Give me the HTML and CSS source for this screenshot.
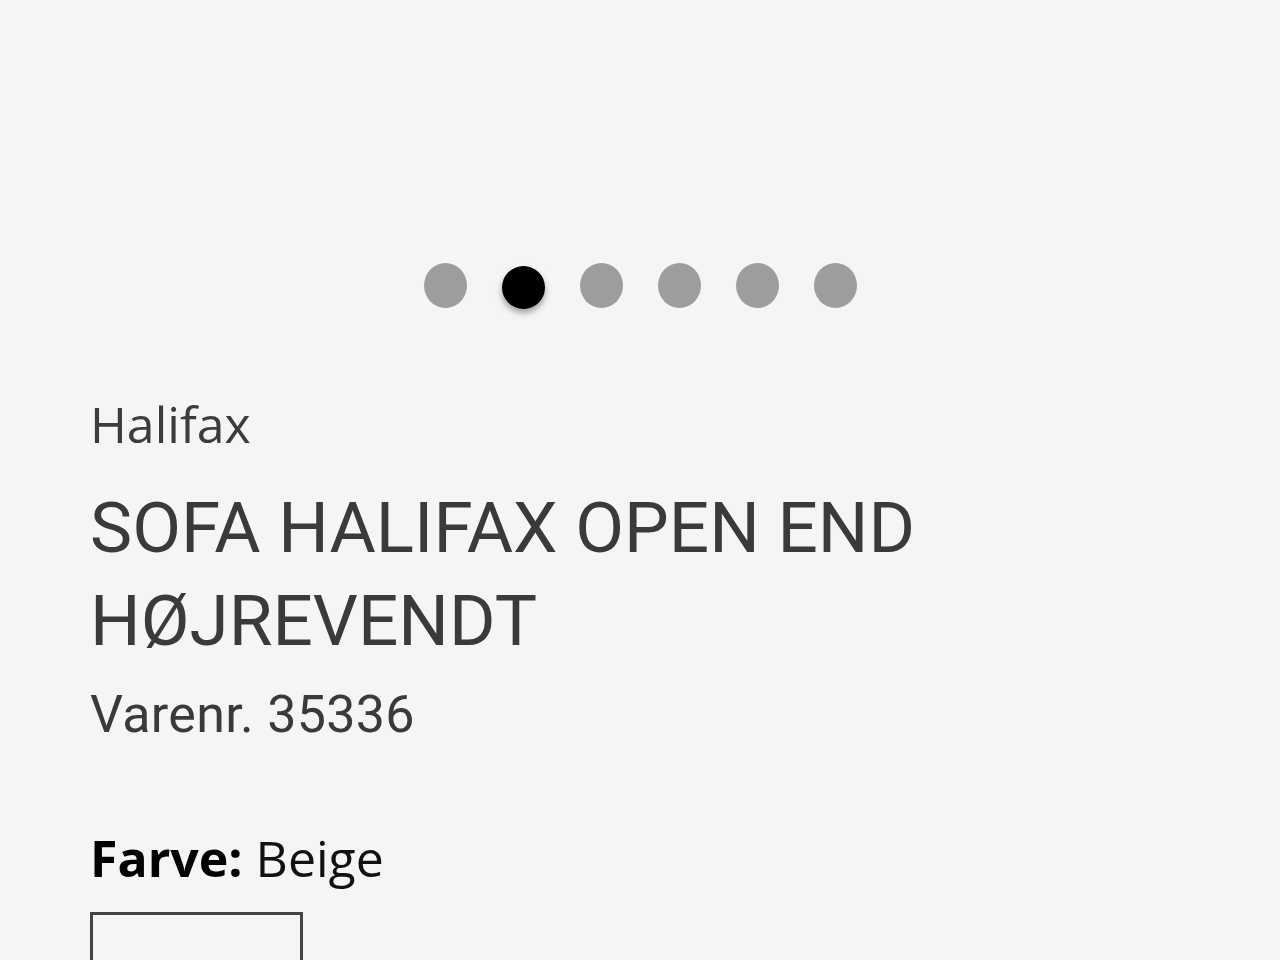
FILE: index.html
```html
<!DOCTYPE html>
<html lang="da">
<head>
<meta charset="utf-8">
<title>Sofa Halifax Open End Højrevendt</title>
<link rel="stylesheet" href="styles.css">
</head>
<body>
<div class="page">
  <div class="gallery">
    <div class="dots">
      <span class="dot"></span>
      <span class="dot active"></span>
      <span class="dot"></span>
      <span class="dot"></span>
      <span class="dot"></span>
      <span class="dot"></span>
    </div>
  </div>
  <section class="product">
    <div class="brand">Halifax</div>
    <h1 class="title">SOFA HALIFAX OPEN END HØJREVENDT</h1>
    <div class="sku">Varenr. 35336</div>
    <div class="color"><strong>Farve:</strong> Beige</div>
    <div class="swatches">
      <div class="swatch"></div>
    </div>
  </section>
</div>
</body>
</html>
```
FILE: styles.css
```css
html, body {
  margin: 0;
  padding: 0;
  background: #f5f5f5;
  height: 100%;
  overflow: hidden;
}

.page {
  font-family: "Open Sans", sans-serif;
  color: #3a3a3a;
}

.gallery {
  padding-top: 263px;
  display: flex;
  justify-content: center;
}

.dots {
  display: flex;
  gap: 35px;
}

.dot {
  width: 43px;
  height: 45px;
  border-radius: 50%;
  background: #9d9d9d;
}

.dot.active {
  background: #000;
  margin-top: 3px;
  height: 43px;
  box-shadow: 0 4px 6px rgba(0, 0, 0, 0.35);
}

.product {
  padding: 0 90px;
  margin-top: 80px;
}

.brand {
  font-family: "Open Sans", sans-serif;
  font-size: 50px;
  line-height: 70px;
  color: #3c3c3c;
}

.title {
  font-family: Roboto, sans-serif;
  font-weight: 400;
  font-size: 71px;
  line-height: 93px;
  margin: 22px 0 0;
  color: #3a3a3a;
  max-width: 900px;
}

.sku {
  font-family: Roboto, sans-serif;
  font-size: 52px;
  letter-spacing: 0.3px;
  line-height: 70px;
  margin-top: 13px;
  color: #3a3a3a;
}

.color {
  font-family: "Open Sans", sans-serif;
  font-size: 50px;
  line-height: 66px;
  margin-top: 75px;
  color: #111;
}

.color strong {
  font-weight: 700;
  color: #000;
}

.swatches {
  margin-top: 21px;
  display: flex;
}

.swatch {
  width: 207px;
  height: 120px;
  border: 3px solid #444;
}
```
